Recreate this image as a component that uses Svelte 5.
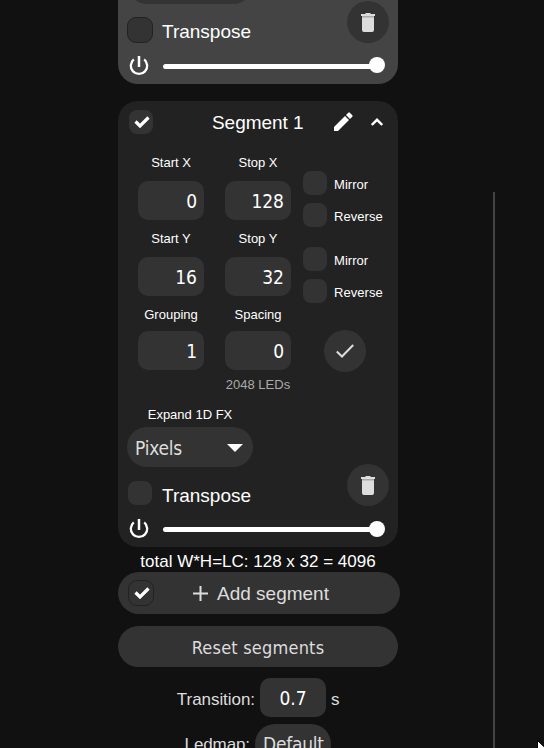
<script>
  const rows = [
    [{ label: 'Start X', value: '0' }, { label: 'Stop X', value: '128' }],
    [{ label: 'Start Y', value: '16' }, { label: 'Stop Y', value: '32' }],
    [{ label: 'Grouping', value: '1' }, { label: 'Spacing', value: '0' }]
  ];
</script>

{#snippet tick()}
  <svg class="tick" width="16" height="12" viewBox="0 0 16 12"><path d="M1.5 5.5 L6 10 L14.5 1.5" fill="none" stroke="#fff" stroke-width="3.2" /></svg>
{/snippet}

{#snippet controls(mode)}
  <div class="fx">
    <div class="fx-left">
      <div class="select">
        {#if mode}
          <span class="ui">{mode}</span>
          <svg width="16" height="8" viewBox="0 0 16 8"><path d="M0 0H16L8 8Z" fill="#fff" /></svg>
        {/if}
      </div>
      <div class="transpose">
        <span class="slot"><span class="box" class:bordered={!mode}></span></span>
        <span class="name">Transpose</span>
      </div>
    </div>
    <div class="round">
      <svg width="14" height="19" viewBox="0 0 14 19">
        <path d="M1 4H13V17Q13 19 11 19H3Q1 19 1 17Z" fill="#ddd" />
        <path d="M0 1H4L5 0H9L10 1H14V3H0Z" fill="#ddd" />
        <path d="M1 3H13V4.5H1Z" fill="#aaa" />
      </svg>
    </div>
  </div>
  <div class="power">
    <svg width="20" height="20" viewBox="0 0 20 20"><path d="M4.8 3.4A8.2 8.2 0 1 0 15.2 3.4" fill="none" stroke="#fff" stroke-width="2.3" /><path d="M10 0V11" stroke="#fff" stroke-width="2.5" /></svg>
    <div class="slider"><span class="thumb"></span></div>
  </div>
{/snippet}

<main>
  <div class="column">
    <section class="panel light">{@render controls('')}</section>

    <section class="panel">
      <header>
        <span class="box">{@render tick()}</span>
        <h2>Segment 1</h2>
        <svg class="pencil" width="19" height="19" viewBox="0 0 19 19"><path d="M0 15L11 4L15 8L4 19H0Z" fill="#fff" /><path d="M12 3L14.3.7Q15 0 15.8.7L18.3 3.2Q19 4 18.3 4.7L16 7Z" fill="#fff" /></svg>
        <svg class="chevron" width="12" height="8" viewBox="0 0 12 8"><path d="M.8 7L6 1.8L11.2 7" fill="none" stroke="#fff" stroke-width="2.4" /></svg>
      </header>

      {#each rows as fields, i}
        <div class="row" class:last={i === 2}>
          {#each fields as f}
            <div class="field">
              <span class="small">{f.label}</span>
              <span class="input">{f.value}</span>
            </div>
          {/each}
          {#if i < 2}
            <div class="options">
              <div><span class="box"></span><span class="small">Mirror</span></div>
              <div><span class="box"></span><span class="small">Reverse</span></div>
            </div>
          {:else}
            <div class="round confirm">
              <svg width="18" height="14" viewBox="0 0 18 14"><path d="M.8 7.5L6 12.5L17.2 1" fill="none" stroke="#ddd" stroke-width="2" /></svg>
            </div>
          {/if}
        </div>
      {/each}
      <div class="small leds">2048 LEDs</div>
      <div class="small expand">Expand 1D FX</div>
      {@render controls('Pixels')}
    </section>

    <div class="total">total W*H=LC: 128 x 32 = 4096</div>

    <div class="button add">
      <span class="box bordered">{@render tick()}</span>
      <svg width="15" height="15" viewBox="0 0 15 15"><path d="M7.5 0V15M0 7.5H15" stroke="#ddd" stroke-width="2" /></svg>
      <span>Add segment</span>
    </div>
    <div class="button reset"><span>Reset segments</span></div>

    <div class="setting transition"><span class="key">Transition:</span><span class="input">0.7</span><span>s</span></div>
    <div class="setting ledmap"><span class="key">Ledmap:</span><span class="pill ui">Default</span></div>
  </div>
  <div class="divider"></div>
  <svg class="cursor" width="12" height="19" viewBox="0 0 12 19"><path d="M.5.5V16L4 12.5L7 18L9.5 17L7 11.5H12Z" fill="#fff" stroke="#000" /></svg>
</main>

<style>
  :global(body) { background: #111; overflow: hidden; }
  main {
    position: relative; width: 544px; height: 748px; overflow: hidden; background: #111; color: #fff;
    display: flex; font: 19px/24px "Liberation Sans", Arial, sans-serif;
  }
  svg { display: block; flex: none; }
  .column { width: 282px; margin-left: 118px; flex: none; }
  .panel { box-sizing: border-box; width: 280px; height: 446px; background: #222; border-radius: 20px; }
  .light {
    height: 84px; margin-bottom: 17px; background: #444; border-radius: 0 0 20px 20px; overflow: hidden;
    display: flex; flex-direction: column; justify-content: flex-end;
  }
  .box {
    box-sizing: border-box; width: 24px; height: 24px; border-radius: 8px; background: #333; flex: none;
    display: flex; align-items: center; justify-content: center;
  }
  .tick { margin-left: 2px; }
  .bordered { width: 26px; height: 26px; border: 1px solid #222; border-radius: 9px; }
  header { display: flex; height: 51px; padding-left: 11px; }
  header .box { margin-top: 9px; }
  h2 { margin: 10px 0 0 59px; width: 93px; font: inherit; letter-spacing: -0.05px; white-space: nowrap; }
  .pencil { margin: 11px 0 0 29px; }
  .chevron { margin: 17px 0 0 18px; }
  .row { display: flex; height: 76px; padding-left: 20px; }
  .field { width: 66px; margin-right: 21px; display: flex; flex-direction: column; align-items: center; }
  .field .small { padding: 1px 0 0; }
  .field .input { margin-top: 8px; justify-content: flex-end; padding-right: 7px; }
  .last .input { margin-top: 6px; }
  .small { font-size: 13px; line-height: 20px; white-space: nowrap; }
  .input {
    box-sizing: border-box; width: 66px; height: 39px; border-radius: 10px; background: #333; flex: none;
    display: flex; align-items: center; padding-top: 2px;
    font: 19px/37px "DejaVu Sans Condensed", "DejaVu Sans", sans-serif; font-stretch: condensed;
  }
  .options { margin: 19px 0 0 -9px; display: flex; flex-direction: column; gap: 8px; }
  .options div { display: flex; gap: 7px; height: 24px; }
  .options .small { margin-top: 4px; letter-spacing: 0.05px; }
  .round { width: 42px; height: 42px; border-radius: 50%; background: #333; flex: none; display: flex; align-items: center; justify-content: center; }
  .last { height: 71px; }
  .confirm { margin: 26px 0 0 12px; }
  .leds { margin-left: 107px; width: 66px; text-align: center; color: #aaa; }
  .expand { margin: 10px 0 2px 9px; width: 126px; text-align: center; }
  .fx { display: flex; justify-content: space-between; align-items: flex-end; height: 79px; padding: 0 9px; flex: none; }
  .select {
    box-sizing: border-box; width: 126px; height: 40px; border-radius: 20px; background: #333; color: #ddd;
    display: flex; justify-content: space-between; align-items: center; padding: 2px 10px 0 8px;
  }
  .ui { font: 19px/38px "DejaVu Sans Condensed", "DejaVu Sans", sans-serif; font-stretch: condensed; letter-spacing: -0.25px; }
  .transpose { display: flex; height: 39px; box-sizing: border-box; padding-top: 13px; }
  .slot { width: 26px; height: 26px; display: flex; align-items: center; justify-content: center; }
  .name { margin: 4px 0 0 9px; }
  .light .name { margin-top: 3px; }
  .power { display: flex; height: 41px; padding-left: 11px; flex: none; }
  .power svg { margin-top: 13px; }
  .slider { width: 214px; height: 5px; margin: 21px 0 0 14px; border-radius: 3px; background: #fff; display: flex; justify-content: flex-end; }
  .thumb { width: 16px; height: 16px; margin: -6px -8px 0 0; border-radius: 50%; background: #fff; flex: none; }
  .light .thumb { margin-top: -7px; }
  .total { height: 25px; line-height: 30px; font-size: 17px; width: 280px; text-align: center; white-space: nowrap; }
  .button { background: #333; color: #ddd; border-radius: 21px; display: flex; align-items: center; white-space: nowrap; }
  .add { height: 42px; padding-left: 10px; box-sizing: border-box; }
  .add > svg { margin: 0 9px 0 39px; }
  .add > span:last-child { padding-top: 2px; }
  .reset { width: 280px; height: 41px; margin-top: 12px; justify-content: center; }
  .reset span { font: 18px/24px "DejaVu Sans Condensed", "DejaVu Sans", sans-serif; font-stretch: condensed; letter-spacing: 0.2px; padding-top: 2px; }
  .setting { display: flex; color: #ddd; font-size: 17px; white-space: nowrap; }
  .setting .key { text-align: right; }
  .transition { margin-top: 11px; height: 39px; line-height: 43px; gap: 5px; }
  .transition .key { width: 137px; letter-spacing: -0.05px; }
  .transition .input { justify-content: center; color: #fff; }
  .ledmap { margin-top: 7px; height: 40px; line-height: 41px; gap: 5px; }
  .ledmap .key { width: 132px; letter-spacing: -0.1px; }
  .pill { box-sizing: border-box; width: 76px; height: 40px; padding-left: 8px; border-radius: 20px; background: #333; line-height: 41px; }
  .divider { width: 2px; height: 556px; margin: 192px 0 0 93px; background: #444; flex: none; }
  .cursor { position: absolute; left: 537px; top: 740px; }
</style>
